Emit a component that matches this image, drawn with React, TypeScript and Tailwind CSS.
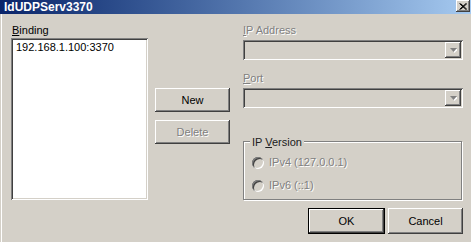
import React from "react";

const raised =
  "shadow-[inset_-1px_-1px_0_#404040,inset_1px_1px_0_#ffffff,inset_-2px_-2px_0_#808080]";
const sunken =
  "shadow-[inset_1px_1px_0_#808080,inset_-1px_-1px_0_#ffffff,inset_2px_2px_0_#404040,inset_-2px_-2px_0_#d4d0c8]";
const disabledText = "text-[#808080] [text-shadow:1px_1px_0_#ffffff]";

function Combo() {
  return (
    <div className={`h-[20px] w-full bg-[#d4d0c8] ${sunken} flex justify-end p-[2px]`}>
      <div className={`w-[16px] h-[16px] bg-[#d4d0c8] ${raised} flex items-center justify-center`}>
        <svg width="7" height="5" viewBox="0 0 7 5" className="mt-[1px]">
          <polygon points="1,1 8,1 4.5,5" fill="#ffffff" />
          <polygon points="0,0 7,0 3.5,4" fill="#808080" />
        </svg>
      </div>
    </div>
  );
}

function Radio({ label }: { label: string }) {
  return (
    <div className="flex items-center h-[13px]">
      <div className={`w-[12px] h-[12px] rounded-full bg-[#d4d0c8] ${sunken}`} />
      <span className={`ml-[5px] ${disabledText}`}>{label}</span>
    </div>
  );
}

export default function App() {
  return (
    <div
      className="w-[471px] h-[242px] overflow-hidden bg-[#d4d0c8] flex flex-col text-[11px] leading-[13px] text-black"
      style={{ fontFamily: '"Liberation Sans", Arial, sans-serif' }}
    >
      <div className="h-[14px] bg-linear-to-r from-[#0a246a] to-[#a6caf0] flex items-start">
        <span className="ml-[4px] mt-[1px] text-white font-bold text-[12px] leading-[12px]">IdUDPServ3370</span>
        <div className={`ml-auto mr-[1px] w-[14px] h-[12px] bg-[#d4d0c8] ${raised} flex items-center justify-center`}>
          <svg width="8" height="7" viewBox="0 0 8 7">
            <path d="M0.5 0.5 L7 6.5 M1.5 0.5 L8 6.5 M7 0.5 L0.5 6.5 M8 0.5 L1.5 6.5" stroke="#000" strokeWidth="1" />
          </svg>
        </div>
      </div>
      <div className="flex-1 flex pl-[1px]">
        <div className="flex-1 flex border-l border-white">
          <div className="ml-[9px] pt-[10px] flex flex-col">
            <div className="h-[13px] pl-[1px]">
              <span className="underline underline-offset-[1px]">B</span>inding
            </div>
            <div className={`mt-[1px] w-[137px] h-[162px] bg-white ${sunken} pl-[5px] pt-[3px]`}>
              192.168.1.100:3370
            </div>
          </div>
          <div className="ml-[7px] pt-[74px] flex flex-col gap-[8px] w-[75px]">
            <div className={`h-[24px] ${raised} flex items-center justify-center`}>New</div>
            <div className={`h-[24px] ${raised} flex items-center justify-center ${disabledText}`}>Delete</div>
          </div>
          <div className="ml-[13px] pt-[10px] w-[220px] flex flex-col">
            <div className={`h-[13px] ${disabledText}`}>
              <span className="underline underline-offset-[1px]">I</span>P Address
            </div>
            <div className="mt-[3px]">
              <Combo />
            </div>
            <div className={`mt-[12px] h-[13px] ${disabledText}`}>
              <span className="underline underline-offset-[1px]">P</span>ort
            </div>
            <div className="mt-[3px]">
              <Combo />
            </div>
            <div className="mt-[33px] relative h-[59px] border border-[#808080] shadow-[1px_1px_0_#ffffff,inset_1px_1px_0_#ffffff] mr-[1px] pl-[8px] pt-[14px] flex flex-col gap-[10px]">
              <div className="absolute left-[6px] top-[-6px] bg-[#d4d0c8] px-[2px] leading-[12px] text-[#202020]">
                IP <span className="underline underline-offset-[1px]">V</span>ersion
              </div>
              <Radio label="IPv4 (127.0.0.1)" />
              <Radio label="IPv6 (::1)" />
            </div>
            <div className="mt-[8px] flex justify-end gap-[3px]">
              <div className="w-[77px] h-[26px] border border-black">
                <div className={`w-full h-full ${raised} flex items-center justify-center`}>OK</div>
              </div>
              <div className={`w-[75px] h-[26px] ${raised} flex items-center justify-center`}>Cancel</div>
            </div>
          </div>
        </div>
      </div>
    </div>
  );
}
